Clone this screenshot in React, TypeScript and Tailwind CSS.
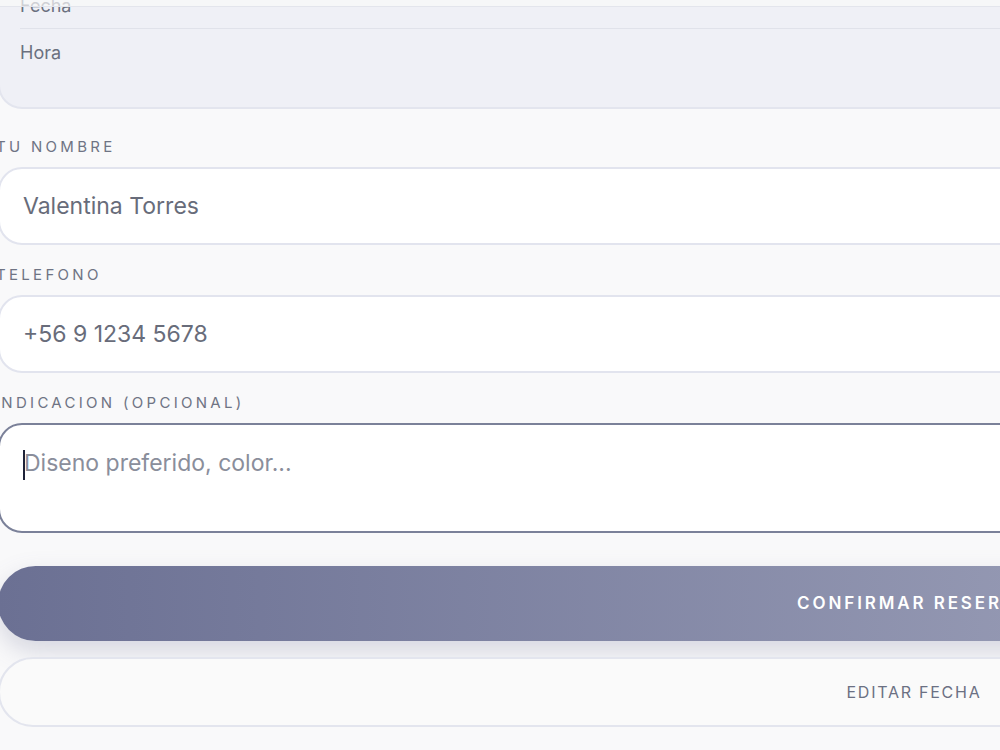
const labelCls =
  'block text-[15px] leading-[20px] tracking-[0.22em] uppercase text-[#6f7484] mb-[10px] -ml-[2px]'
const fieldCls =
  'h-[78px] rounded-[24px] border-2 border-[#e2e4ee] bg-white pl-[23px] flex items-center text-[23px] text-[#686c7a]'

export default function App() {
  return (
    <div className="relative min-h-screen w-full overflow-hidden bg-[#f9f9fa]" style={{ fontFamily: 'Inter, "DejaVu Sans", sans-serif' }}>
      {/* sticky top bar, mostly scrolled away */}
      <div className="absolute left-0 right-0 top-0 z-10 h-[7px] border-b border-[#e3e5ec] bg-[#f9f9fa]/70" />

      <div className="w-[1832px] -ml-[2px] flex flex-col">
        {/* Summary card */}
        <div className="-mt-[31px] rounded-[24px] border-2 border-[#e3e5ee] bg-[#eff0f6] pl-[20px] pt-[12px] pb-[32px]">
          <div className="h-[46px] flex items-center border-b border-[#e0e2ea] text-[18px] text-[#6b7080]">Fecha</div>
          <div className="h-[46px] flex items-center text-[18px] text-[#6b7080]">Hora</div>
        </div>

        <div className="mt-[28px]">
          <span className={labelCls}>Tu nombre</span>
          <div className={fieldCls}>Valentina Torres</div>
        </div>

        <div className="mt-[20px]">
          <span className={labelCls}>Telefono</span>
          <div className={fieldCls}>+56 9 1234 5678</div>
        </div>

        <div className="mt-[20px]">
          <span className={labelCls + ' -ml-[4px]'}>Indicacion (opcional)</span>
          <div className="h-[110px] rounded-[24px] border-2 border-[#7b8199] bg-white pl-[23px] pt-[22px] text-[23px] leading-[32px] text-[#8a8e9b]">
            <span className="inline-block w-[2px] h-[30px] bg-[#1e2238] align-middle -mr-[1px]" />
            Diseno preferido, color...
          </div>
        </div>

        <button className="mt-[33px] h-[75px] rounded-full bg-gradient-to-r from-[#6b7093] to-[#b5b8cb] text-white font-semibold text-[17px] tracking-[0.17em] uppercase shadow-[0_10px_24px_rgba(107,112,147,0.25)]">
          Confirmar reserva
        </button>

        <button className="mt-[16px] h-[70px] rounded-full border-2 border-[#e3e5ee] bg-[#fafafa] text-[16px] tracking-[0.11em] uppercase text-[#6b7083]">
          Editar fecha
        </button>
      </div>
    </div>
  )
}
